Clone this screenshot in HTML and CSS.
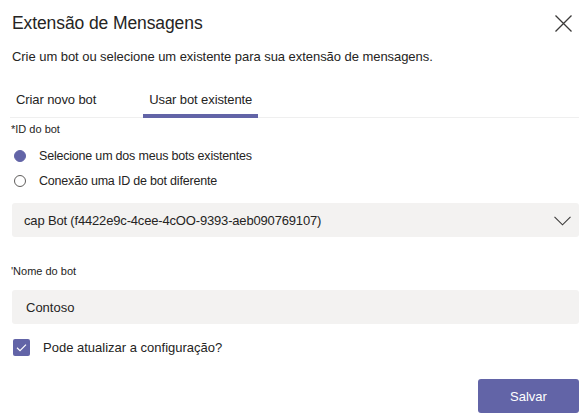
FILE: index.html
```html
<!DOCTYPE html>
<html lang="pt">
<head>
<meta charset="utf-8">
<title>Extensão de Mensagens</title>
<link rel="stylesheet" href="styles.css">
</head>
<body>
<div class="dialog">
  <div class="header">
    <h1 class="title">Extensão de Mensagens</h1>
    <button class="close" aria-label="Fechar">
      <svg width="17" height="17" viewBox="0 0 17 17"><path d="M0.5 0.5 L16.5 16.5 M16.5 0.5 L0.5 16.5" stroke="#3b3a39" stroke-width="1.3" fill="none"/></svg>
    </button>
  </div>
  <p class="subtitle">Crie um bot ou selecione um existente para sua extensão de mensagens.</p>
  <div class="tabs">
    <div class="tab">Criar novo bot</div>
    <div class="tab active">Usar bot existente</div>
  </div>
  <div class="label">*ID do bot</div>
  <div class="radios">
    <div class="radio-row"><span class="radio checked"></span><span class="radio-text">Selecione um dos meus bots existentes</span></div>
    <div class="radio-row"><span class="radio"></span><span class="radio-text">Conexão uma ID de bot diferente</span></div>
  </div>
  <div class="select">
    <span class="select-text">cap Bot (f4422e9c-4cee-4cOO-9393-aeb090769107)</span>
    <svg class="chev" width="17" height="10" viewBox="0 0 17 10"><path d="M0.5 0.8 L8.5 8.8 L16.5 0.8" stroke="#3b3a39" stroke-width="1.1" fill="none"/></svg>
  </div>
  <div class="label label2">'Nome do bot</div>
  <div class="input">Contoso</div>
  <div class="check-row">
    <span class="checkbox"><svg width="17" height="17" viewBox="0 0 17 17"><path d="M4 8.8 L7 11.6 L13 5.6" stroke="#fff" stroke-width="1.2" fill="none"/></svg></span>
    <span class="check-text">Pode atualizar a configuração?</span>
  </div>
  <div class="footer">
    <button class="primary">Salvar</button>
  </div>
</div>
</body>
</html>
```
FILE: styles.css
```css
* { box-sizing: border-box; }
html, body { margin: 0; padding: 0; background: #fff; }
body {
  font-family: "Liberation Sans", Arial, sans-serif;
  color: #252423;
  width: 585px;
  height: 420px;
  overflow: hidden;
}
.dialog {
  display: flex;
  flex-direction: column;
  padding: 0 6px 0 12px;
}
.header {
  display: flex;
  justify-content: space-between;
  align-items: flex-start;
  padding-top: 12px;
}
.title {
  margin: 0;
  font-size: 17.5px;
  font-weight: normal;
  line-height: 22px;
  letter-spacing: -0.1px;
}
.close {
  background: none;
  border: 0;
  padding: 0;
  margin: 3px 7px 0 0;
  width: 17px;
  height: 17px;
  display: flex;
}
.subtitle {
  margin: 14px 0 0;
  font-size: 13px;
  line-height: 18px;
  letter-spacing: -0.05px;
}
.tabs {
  display: flex;
  margin: 25px 0 0 -2px;
  border-bottom: 1px solid #efefef;
}
.tab {
  font-size: 13px;
  line-height: 18px;
  padding: 0 6px 5px;
  border-bottom: 4px solid transparent;
  margin-right: 41px;
  margin-bottom: -1px;
  letter-spacing: -0.1px;
}
.tab.active { border-bottom-color: #6264a7; }
.label {
  font-size: 11px;
  line-height: 14px;
  margin-top: 4px;
  margin-left: -1px;
}
.radios {
  display: flex;
  flex-direction: column;
  gap: 8px;
  margin-top: 11px;
  margin-left: 2px;
}
.radio-row {
  display: flex;
  align-items: center;
  height: 17px;
}
.radio {
  width: 12px;
  height: 12px;
  border-radius: 50%;
  border: 1px solid #605e5c;
  margin-right: 13px;
  flex: none;
}
.radio.checked {
  background: #6264a7;
  border-color: #6264a7;
}
.radio-text {
  font-size: 12.5px;
  letter-spacing: -0.2px;
}
.select {
  margin-top: 14px;
  height: 34px;
  background: #f3f2f1;
  border-radius: 3px;
  display: flex;
  align-items: center;
  justify-content: space-between;
  padding: 0 8px 0 12px;
  font-size: 13px;
}
.select-text { letter-spacing: -0.17px; }
.chev { margin-top: 1px; }
.label2 { margin-top: 27px; }
.input {
  margin-top: 12px;
  height: 34px;
  background: #f3f2f1;
  border-radius: 3px;
  display: flex;
  align-items: center;
  padding-left: 14px;
  font-size: 13px;
}
.check-row {
  display: flex;
  align-items: center;
  margin-top: 15px;
  margin-left: 1px;
}
.checkbox {
  width: 17px;
  height: 17px;
  border-radius: 2px;
  background: #6264a7;
  display: flex;
  margin-right: 13px;
}
.check-text { font-size: 13px; }
.footer {
  display: flex;
  justify-content: flex-end;
  margin-top: 23px;
}
.primary {
  width: 101px;
  height: 34px;
  background: #6264a7;
  color: #fff;
  border: 0;
  border-radius: 3px;
  font-family: "Liberation Sans", Arial, sans-serif;
  font-size: 13px;
}
```
